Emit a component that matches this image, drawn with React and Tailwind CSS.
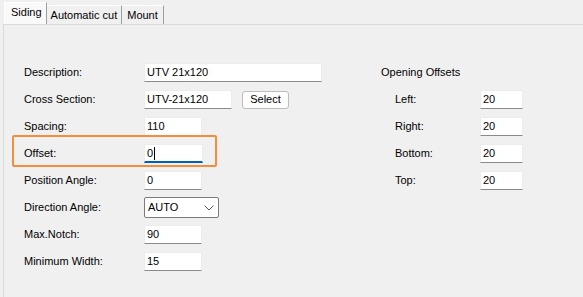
import React from "react";

const font = { fontFamily: '"Liberation Sans", Arial, sans-serif' };

function Field({ value, w, focused }) {
  return (
    <div
      className={`h-[19px] bg-white flex items-center pl-[2px] text-[11px] text-black border border-[#ececec] ${
        focused ? "border-b-2 border-b-[#005fb8]" : "border-b-[#8a8a8a]"
      }`}
      style={{ width: w }}
    >
      {value}
      {focused && <span className="inline-block w-px h-[13px] bg-black ml-[1px]" />}
    </div>
  );
}

function Row({ label, children, labelW = 120 }) {
  return (
    <div className="flex items-center h-[19px]">
      <div className="shrink-0 text-[11px] text-black" style={{ width: labelW }}>
        {label}
      </div>
      {children}
    </div>
  );
}

export default function App() {
  return (
    <div className="w-[583px] h-[297px] bg-[#f0f0f0] flex flex-col overflow-hidden" style={font}>
      <div className="flex items-end pl-[4px] pt-[2px] h-[24px] text-[11px] text-black">
        <div className="h-[22px] pl-[6px] pr-[4px] pb-[2px] flex items-center bg-[#f9f9f9] border-t border-l border-[#ffffff] border-r border-r-[#a0a0a0] relative z-10">
          Siding
        </div>
        <div className="h-[19px] pl-[4px] pr-[4px] flex items-center border-t border-[#ffffff] border-r border-r-[#a0a0a0]">
          Automatic cut
        </div>
        <div className="h-[19px] px-[5px] flex items-center border-t border-[#ffffff] border-r border-r-[#a0a0a0]">
          Mount
        </div>
      </div>
      <div className="flex-1 ml-[3px] border-t border-l border-t-[#dadada] border-l-[#dadada] flex">
        <div className="w-[357px] pl-[20px] pt-[38px] flex flex-col gap-[8px]">
          <Row label="Description:">
            <Field value="UTV 21x120" w={178} />
          </Row>
          <Row label="Cross Section:">
            <Field value="UTV-21x120" w={88} />
            <div className="ml-[10px] w-[47px] h-[18px] rounded-[3px] border border-[#bdbdbd] bg-[#fdfdfd] flex items-center justify-center text-[11px]">
              Select
            </div>
          </Row>
          <Row label="Spacing:">
            <Field value="110" w={58} />
          </Row>
          <div className="relative">
            <div className="absolute left-[-12px] top-[-9px] w-[205px] h-[32px] border-2 border-[#f78c3c] rounded-[2px]" />
            <Row label="Offset:">
              <Field value="0" w={59} focused />
            </Row>
          </div>
          <Row label="Position Angle:">
            <Field value="0" w={58} />
          </Row>
          <Row label="Direction Angle:">
            <div className="w-[75px] h-[21px] bg-white border border-[#7a7a7a] rounded-[2px] flex items-center justify-between pl-[3px] pr-[4px] text-[11px]">
              <span>AUTO</span>
              <svg width="10" height="6" viewBox="0 0 10 6">
                <path d="M0.5 0.5 L5 5 L9.5 0.5" fill="none" stroke="#555" strokeWidth="1" />
              </svg>
            </div>
          </Row>
          <Row label="Max.Notch:">
            <Field value="90" w={58} />
          </Row>
          <Row label="Minimum Width:">
            <Field value="15" w={58} />
          </Row>
        </div>
        <div className="pl-[20px] pt-[38px] flex flex-col gap-[8px]">
          <div className="h-[19px] flex items-center text-[11px]">Opening Offsets</div>
          <div className="pl-[14px] flex flex-col gap-[8px]">
            <Row label="Left:" labelW={85}>
              <Field value="20" w={43} />
            </Row>
            <Row label="Right:" labelW={85}>
              <Field value="20" w={43} />
            </Row>
            <Row label="Bottom:" labelW={85}>
              <Field value="20" w={43} />
            </Row>
            <Row label="Top:" labelW={85}>
              <Field value="20" w={43} />
            </Row>
          </div>
        </div>
      </div>
    </div>
  );
}
